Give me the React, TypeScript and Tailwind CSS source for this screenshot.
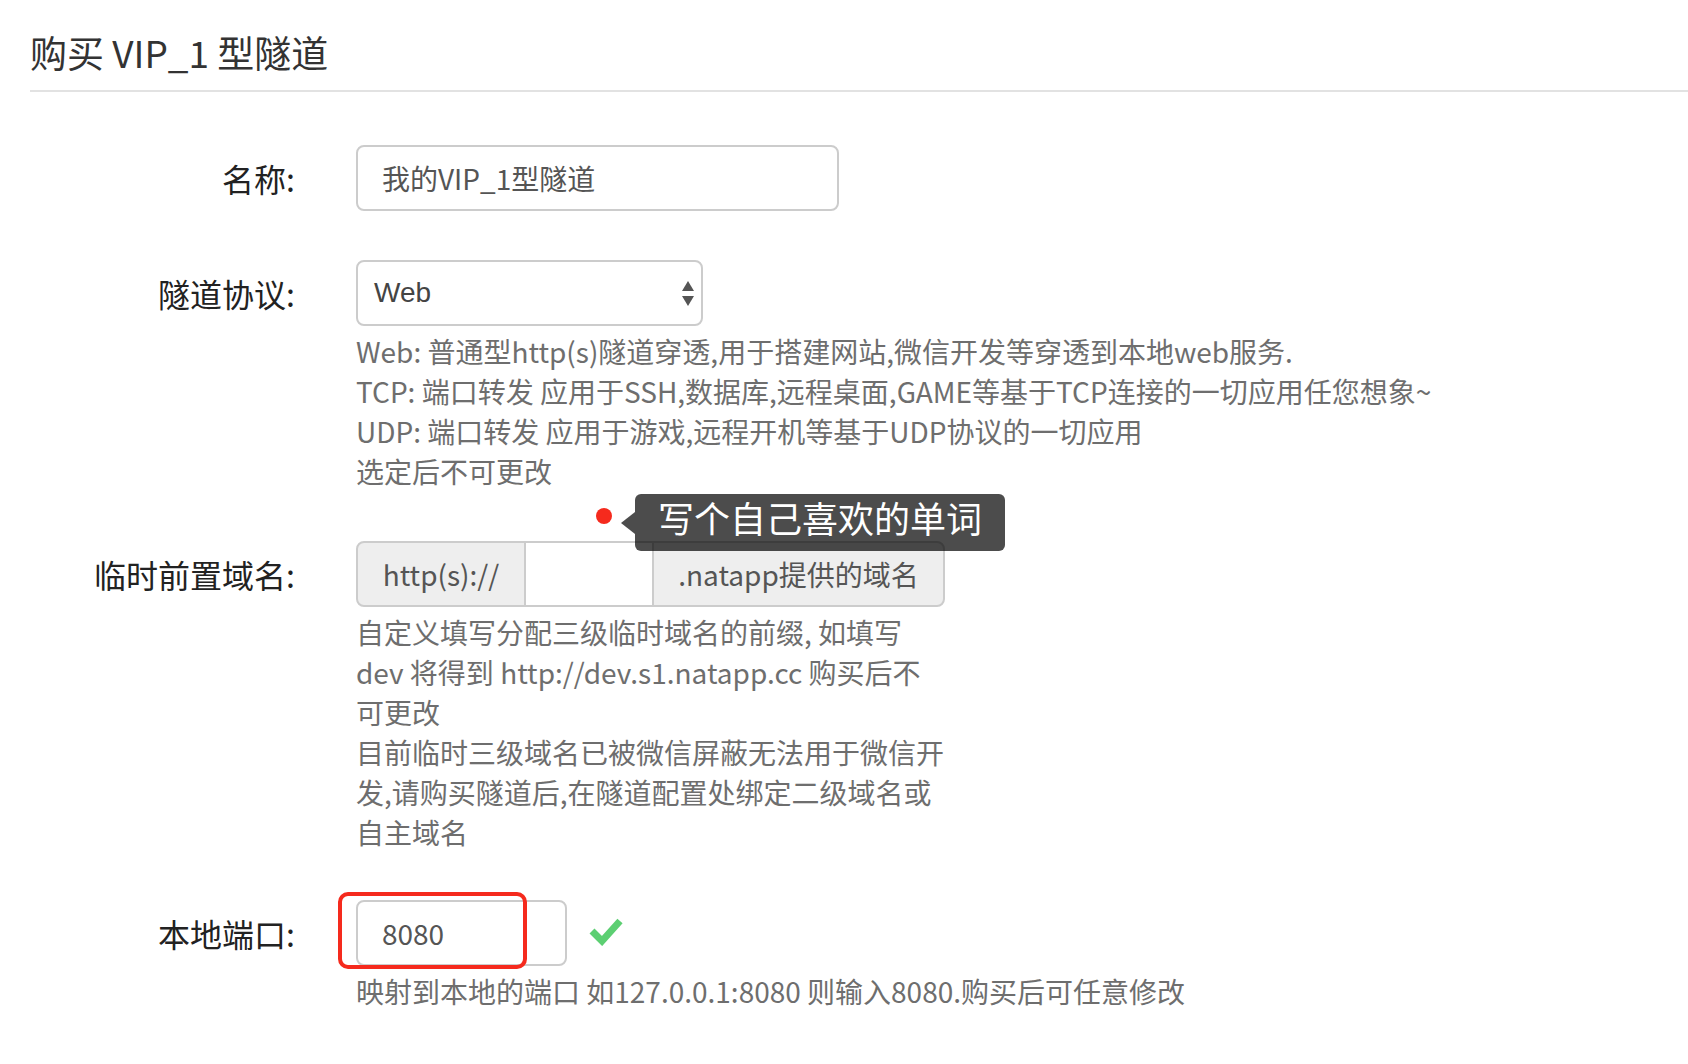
import React from 'react'
import clsx from 'clsx'

function FormRow({
  label,
  children,
  className,
}: {
  label: string
  children: React.ReactNode
  className?: string
}) {
  return (
    <div className={clsx('flex items-start', className)}>
      <label className="w-[265px] h-[66px] shrink-0 flex items-center justify-end text-[32px] font-normal text-[#222]">
        {label}
      </label>
      <div className="ml-[61px] relative">{children}</div>
    </div>
  )
}

function HelpBlock({ lines, className }: { lines: string[]; className?: string }) {
  return (
    <div className={clsx('mt-[5px] text-[28px] leading-[40px] text-[#6e6e6e]', className)}>
      {lines.map((line) => (
        <div key={line} className="whitespace-nowrap">
          {line}
        </div>
      ))}
    </div>
  )
}

function SelectArrows() {
  return (
    <svg width="12" height="25" viewBox="0 0 12 25" className="fill-[#555]">
      <path d="M6 0 L12 10 L0 10 Z" />
      <path d="M0 15 L12 15 L6 25 Z" />
    </svg>
  )
}

function CheckIcon() {
  return (
    <svg width="34" height="30" viewBox="0 0 34 30">
      <path
        d="M3 15 L13 25 L31 5"
        fill="none"
        stroke="#5ccf72"
        strokeWidth="7"
        strokeLinejoin="miter"
      />
    </svg>
  )
}

export default function App() {
  return (
    <div className="min-h-screen bg-white pl-[30px] pt-[32px] font-['Noto_Sans_CJK_SC','Noto_Sans',sans-serif] text-[#333]">
      <h3 className="text-[37px] leading-[40px] font-normal text-[#333]">购买 VIP_1 型隧道</h3>
      <div className="mt-[18px] h-[2px] bg-[#e2e2e2]" />

      <FormRow label="名称:" className="mt-[53px]">
        <input
          defaultValue="我的VIP_1型隧道"
          className="h-[66px] w-[483px] rounded-[8px] border-2 border-[#ccc] px-[24px] text-[28px] text-[#555] outline-none"
        />
      </FormRow>

      <FormRow label="隧道协议:" className="mt-[49px]">
        <div className="flex h-[66px] w-[347px] items-center justify-between rounded-[8px] border-2 border-[#ccc] pl-[16px] pr-[7px]">
          <span className="font-['Liberation_Sans',sans-serif] text-[28px] text-[#444]">Web</span>
          <SelectArrows />
        </div>
        <HelpBlock
          lines={[
            'Web: 普通型http(s)隧道穿透,用于搭建网站,微信开发等穿透到本地web服务.',
            'TCP: 端口转发 应用于SSH,数据库,远程桌面,GAME等基于TCP连接的一切应用任您想象~',
            'UDP: 端口转发 应用于游戏,远程开机等基于UDP协议的一切应用',
            '选定后不可更改',
          ]}
        />
      </FormRow>

      <FormRow label="临时前置域名:" className="mt-[50px]">
        <div className="flex h-[66px] text-[28px] text-[#555]">
          <span className="flex w-[170px] items-center justify-center rounded-l-[8px] border-2 border-[#ccc] bg-[#eee]">
            http(s)://
          </span>
          <input className="w-[126px] border-y-2 border-[#ccc] px-[12px] outline-none" />
          <span className="flex w-[293px] items-center justify-center rounded-r-[8px] border-2 border-[#ccc] bg-[#eee]">
            .natapp提供的域名
          </span>
        </div>

        {/* tooltip over the input group */}
        <div className="absolute left-[240px] top-[-33px] h-[16px] w-[16px] rounded-full bg-[#f52a1d]" />
        <div className="absolute left-[265px] top-[-47px] flex items-center">
          <div className="h-0 w-0 border-y-[11px] border-r-[14px] border-y-transparent border-r-black/70" />
          <div className="h-[57px] rounded-[6px] bg-black/70 px-[23px] text-[36px] leading-[46px] text-white whitespace-nowrap">
            写个自己喜欢的单词
          </div>
        </div>

        <HelpBlock
          lines={[
            '自定义填写分配三级临时域名的前缀, 如填写',
            'dev 将得到 http://dev.s1.natapp.cc 购买后不',
            '可更改',
            '目前临时三级域名已被微信屏蔽无法用于微信开',
            '发,请购买隧道后,在隧道配置处绑定二级域名或',
            '自主域名',
          ]}
        />
      </FormRow>

      <FormRow label="本地端口:" className="mt-[48px]">
        <div className="flex items-center">
          <div className="relative">
            <input
              defaultValue="8080"
              className="h-[66px] w-[211px] rounded-[8px] border-2 border-[#ccc] px-[24px] text-[28px] text-[#555] outline-none"
            />
            <div className="absolute left-[-18px] top-[-8px] h-[77px] w-[189px] rounded-[10px] border-4 border-[#f52a1d]" />
          </div>
          <div className="ml-[22px] -mt-[4px]">
            <CheckIcon />
          </div>
        </div>
        <HelpBlock
          className="mt-[4px]"
          lines={['映射到本地的端口 如127.0.0.1:8080 则输入8080.购买后可任意修改']}
        />
      </FormRow>
    </div>
  )
}
